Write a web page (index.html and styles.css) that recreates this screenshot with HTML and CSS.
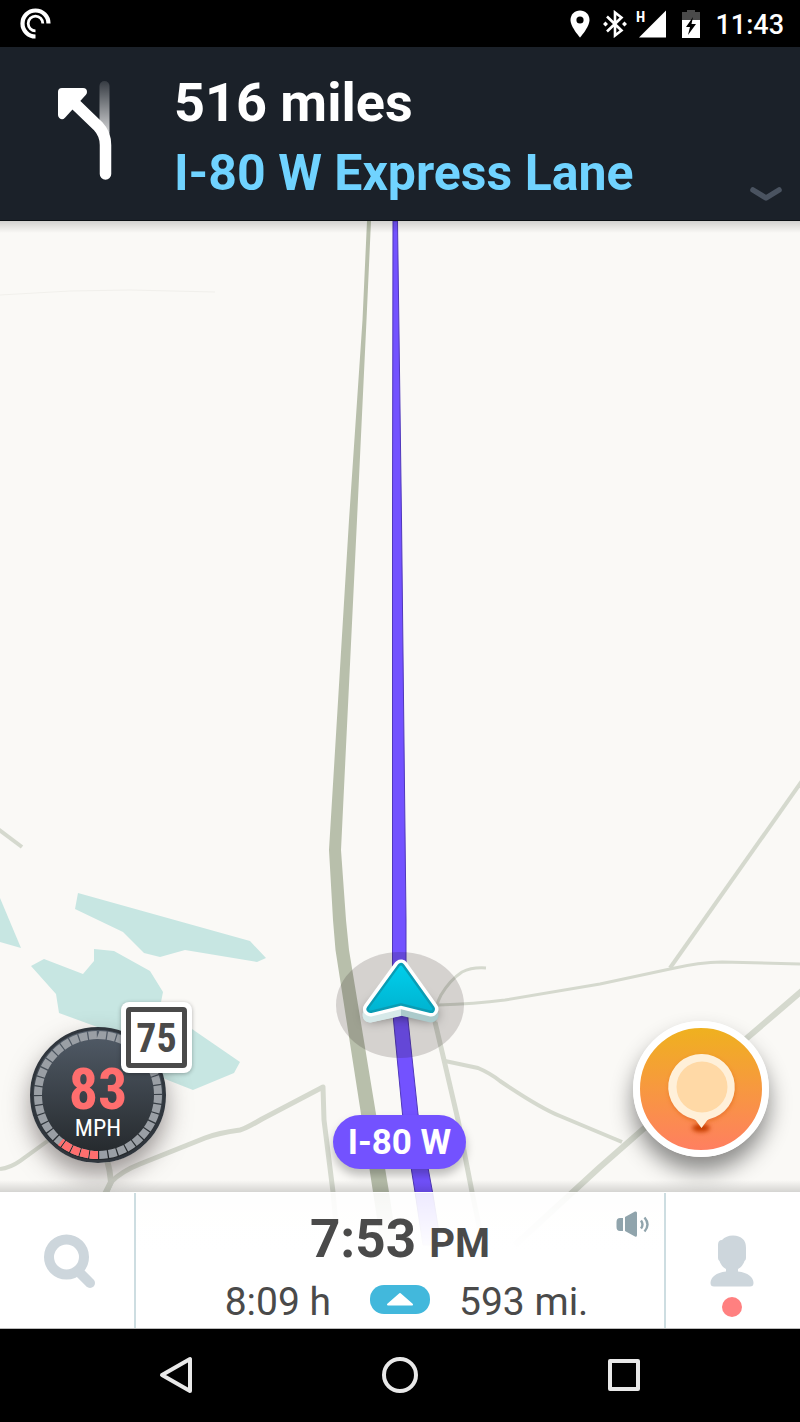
FILE: index.html
```html
<!DOCTYPE html>
<html lang="en">
<head>
    <meta charset="UTF-8">
    <meta name="viewport" content="width=device-width, initial-scale=1.0">
    <title>Navigation</title>
    <link rel="stylesheet" href="styles.css">
</head>
<body>
    <div class="status-bar">
        <svg class="app-icon" width="32" height="32" viewBox="0 0 32 32" fill="none" stroke="#fff">
            <path d="M15.500 28.500A13 13 0 1 1 28.500 15.500" stroke-width="4.200"/>
            <path d="M15.500 22.800A7.300 7.300 0 1 1 22.800 15.500" stroke-width="2.800"/>
        </svg>
        <svg class="pin-icon" width="20" height="28" viewBox="0 0 20 28">
            <path d="M10 .5C4.600.5.500 4.600.5 10c0 7 9.500 17.500 9.500 17.500S19.500 17 19.500 10C19.500 4.600 15.400.5 10 .5z" fill="#fff"/>
            <circle cx="10" cy="10" r="3.600" fill="#000"/>
        </svg>
        <svg class="bt-icon" width="24" height="28" viewBox="0 0 24 28" fill="none" stroke="#fff" stroke-width="2.600">
            <path d="M4 6.500l14.500 14-6.500 5V2.500l6.500 5L4 21.500"/>
            <path d="M0 14l2.500-2.500L5 14l-2.500 2.500zM19 14l2.500-2.500L24 14l-2.500 2.500z" fill="#fff" stroke="none"/>
        </svg>
        <svg class="signal-icon" width="30" height="28" viewBox="0 0 30 28" fill="#fff">
            <path d="M30 .5v27H3z"/>
            <text x="0" y="12" class="signal-type">H</text>
        </svg>
        <svg class="battery-icon" width="18" height="28" viewBox="0 0 18 28">
            <path d="M0 2h5V0h8v2h5v9H0z" fill="#4a4a4a"/>
            <path d="M0 10h18v18H0z" fill="#fff"/>
            <path d="M11 7L4 17h4l-2 8 8-11H9.500z" fill="#000"/>
        </svg>
        <span class="clock">11:43</span>
    </div>

    <header class="directions">
        <svg class="turn-icon" width="56" height="102" viewBox="56 79 56 102">
            <defs>
                <linearGradient id="fade" x1="0" y1="0" x2="0" y2="1">
                    <stop offset="0" stop-color="#fff" stop-opacity=".12"/>
                    <stop offset="1" stop-color="#fff" stop-opacity=".85"/>
                </linearGradient>
            </defs>
            <rect x="99.500" y="81" width="10" height="56" rx="5" fill="url(#fade)"/>
            <path d="M105.500 174V145Q105.500 134 98 126L72 101" fill="none" stroke="#fff" stroke-width="11.500" stroke-linecap="round"/>
            <path d="M62 92H83L62 115z" fill="#fff" stroke="#fff" stroke-width="8" stroke-linejoin="round"/>
        </svg>
        <div class="direction-text">
            <h1 class="distance">516 miles</h1>
            <p class="street">I-80 W Express Lane</p>
        </div>
        <button class="expand" aria-label="Show next turns">
            <svg width="32" height="14" viewBox="0 0 32 14" fill="none" stroke="#4a5360" stroke-width="5.500" stroke-linecap="round" stroke-linejoin="round">
                <path d="M3 3l13 8 13-8"/>
            </svg>
        </button>
    </header>

    <main class="map">
        <svg class="map-canvas" viewBox="0 221 800 1108" preserveAspectRatio="xMidYMax slice">
            <defs>
                <linearGradient id="car" x1="0" y1="0" x2="0" y2="1">
                    <stop offset="0" stop-color="#00cdea"/>
                    <stop offset="1" stop-color="#00b5d2"/>
                </linearGradient>
                <filter id="car-shadow" x="-60%" y="-100%" width="220%" height="300%">
                    <feGaussianBlur stdDeviation="6"/>
                </filter>
            </defs>

            <!-- water -->
            <g fill="#c7e6e2">
                <path d="M78 893L250 941 266 958 257 962 185 950 160 957 144 953 123 932 75 909z"/>
                <path d="M0 898L21 948 0 942z"/>
                <path d="M31 966L44 959 83 974 94 961V949L114 951 150 971 163 992 160 1007 192 1029 240 1062 234 1073 193 1090 165 1079 100 1028 59 1013 56 994z"/>
            </g>

            <!-- small roads -->
            <g fill="none" stroke="#d5d9ce" stroke-width="4" stroke-linejoin="round">
                <path d="M0 295L70 291 130 290 215 292" stroke="#f1f0ec" stroke-width="1"/>
                <path d="M-2 829L22 847"/>
                <path d="M802 781L670 968"/>
                <path d="M438 1005Q475 1004 505 1000L600 984 670 969Q700 962 722 962L800 964" stroke-width="3"/>
                <path d="M435 1024Q434 1008 441 995 450 980 462 972 472 967 486 968" stroke-width="3"/>
                <path d="M435 1022L444 1060 458 1120 472 1192 482 1240" stroke-width="5"/>
                <path d="M445 1061L478 1068Q490 1073 500 1081 540 1108 560 1116L622 1142" stroke-width="4"/>
                <path d="M803 990L747 1038 600 1167 515 1245" stroke-width="6"/>
                <path d="M0 1169Q10 1168 20 1161L60 1132" stroke-width="4"/>
                <path d="M106 1194L111 1182Q122 1171 140 1164L205 1138Q218 1133 240 1130 245 1129 262 1119L323 1087 324 1120 333 1192 336 1225" stroke-width="5"/>
                <path d="M107 1160Q110 1170 111 1182L105 1194" stroke-width="6"/>
            </g>

            <!-- highway and route -->
            <path d="M367 221H371L366.500 320 357 520 341 850 346 920 349 950 376 1114 389 1192 397 1245H381L373 1192 361 1114 335.500 950 333 920 329 850 349 520 362.500 320z" fill="#b8bfab"/>
            <path d="M393 221H397.500L401.500 520 406 920V960L408 1020 418 1114 432.500 1192 441 1245H423L415 1192 402.500 1114 393.500 1020 392.500 960V520z" fill="#7352ff" stroke="#5038bb" stroke-width="1"/>

            <!-- current position -->
            <ellipse cx="400" cy="1005" rx="64" ry="53" fill="#201010" fill-opacity=".17"/>
            <path d="M401 990L371 1014 401 1010 431 1014z" fill="#000" fill-opacity=".4" stroke="#000" stroke-opacity=".4" stroke-width="14" stroke-linejoin="round" filter="url(#car-shadow)"/>
            <path d="M401 973L370 1015 401 1008z" fill="#d6e9e9" stroke="#d6e9e9" stroke-width="15" stroke-linejoin="round"/>
            <path d="M401 1008L431 1015 401 980z" fill="#abcacb" stroke="#abcacb" stroke-width="15" stroke-linejoin="round"/>
            <path d="M363 1009V1015Q363 1023 371 1022.500L401 1016V1001z" fill="#d6e9e9"/>
            <g stroke-linejoin="round">
                <path d="M401 967L370.500 1009 401 1001.500 431 1009z" fill="#fff" stroke="#fff" stroke-width="15"/>
                <path d="M401 967L370.500 1009 401 1001.500 431 1009z" fill="#0a9cb4" stroke="#0a9cb4" stroke-width="8"/>
                <path d="M401 967L370.500 1009 401 1001.500 431 1009z" fill="url(#car)" stroke="url(#car)" stroke-width="3"/>
            </g>
        </svg>

        <div class="map-controls">
            <div class="speedometer">
                <svg class="gauge" viewBox="0 0 136 136" fill="none" stroke-width="8">
                    <g transform="rotate(90 68 68)">
                        <circle cx="68" cy="68" r="60" pathLength="400" stroke="#9a9fa5" stroke-dasharray="8.700 1.300"/>
                        <circle cx="68" cy="68" r="60" pathLength="400" stroke="#ff6e6e" stroke-dasharray="8.700 1.300 8.700 1.300 8.700 1.300 8.700 1.300 3 357"/>
                    </g>
                </svg>
                <span class="speed">83</span>
                <span class="unit">MPH</span>
                <div class="speed-limit"><span>75</span></div>
            </div>

            <div class="road-label">I-80 W</div>

            <button class="report" aria-label="Report">
                <svg width="122" height="122" viewBox="7 7 122 122">
                    <defs>
                        <filter id="soft" x="-50%" y="-80%" width="200%" height="260%">
                            <feGaussianBlur stdDeviation="2"/>
                        </filter>
                    </defs>
                    <ellipse cx="68" cy="107" rx="9" ry="4" fill="#c63c00" filter="url(#soft)"/>
                    <circle cx="69" cy="68" r="33" fill="#d85a10" fill-opacity=".5" filter="url(#soft)"/>
                    <path d="M69 33a33 33 0 0 1 7 65.200Q74 99 73 101L68.500 107 64 101Q63 99 61 98.200A33 33 0 0 1 69 33z" fill="#fff0d9"/>
                    <circle cx="69" cy="66" r="25.500" fill="#ffd9a6"/>
                </svg>
            </button>
        </div>

        <section class="bottom-bar">
            <button class="side-button search" aria-label="Search">
                <svg width="52" height="56" viewBox="0 0 52 56" fill="none" stroke="#cdd6dc" stroke-width="10" stroke-linecap="round">
                    <circle cx="22.500" cy="23" r="17.500"/>
                    <path d="M35 38l11 11"/>
                </svg>
            </button>

            <div class="eta">
                <div class="arrival">
                    <p class="arrival-time">7:53 <span class="meridiem">PM</span></p>
                    <button class="sound" aria-label="Sound">
                        <svg width="34" height="26" viewBox="0 0 34 26" fill="#90a4ac">
                            <path d="M4 7H7V20H4Q.5 20 .5 16V11Q.5 7 4 7z"/>
                            <path d="M9 6L19 .5Q21 0 21 2V24Q21 26.500 19 25.500L9 20z"/>
                            <path d="M25 9.500Q28 13.500 25 17.500M28.500 6.500Q34.500 13.500 28.500 20.500" fill="none" stroke="#90a4ac" stroke-width="2.400"/>
                        </svg>
                    </button>
                </div>
                <div class="trip">
                    <span class="duration">8:09 h</span>
                    <button class="routes" aria-label="Routes">
                        <svg width="28" height="14" viewBox="0 0 28 14" fill="#fff" stroke="#fff" stroke-width="2" stroke-linejoin="round">
                            <path d="M14 2L26 12.500H2z"/>
                        </svg>
                    </button>
                    <span class="remaining">593 mi.</span>
                </div>
            </div>

            <button class="side-button profile" aria-label="Profile">
                <svg width="44" height="52" viewBox="0 0 44 52" fill="#cdd6dc">
                    <path d="M12 5Q16 .5 23 .5 36 1 36 13V23Q36 25 34.500 26 33 31 28 34V36.500Q43 38.500 43.500 48 43.500 51.500 40 51.500H4Q.5 51.500 .5 48 1 38.500 16 36.500V34Q11 31 9.500 26 8 25 8 23V10Q8 5 12 5z"/>
                </svg>
                <span class="offline-dot"></span>
            </button>
        </section>
    </main>

    <nav class="system-nav">
        <button aria-label="Back">
            <svg width="36" height="38" viewBox="0 0 36 38"><path d="M32 3V35L4 19z"/></svg>
        </button>
        <button aria-label="Home">
            <svg width="38" height="38" viewBox="0 0 38 38"><circle cx="19" cy="19" r="16"/></svg>
        </button>
        <button aria-label="Recent apps">
            <svg width="34" height="34" viewBox="0 0 34 34"><rect x="3" y="3" width="28" height="28"/></svg>
        </button>
    </nav>
</body>
</html>
```

FILE: styles.css
```css
* {
    margin: 0;
    padding: 0;
    box-sizing: border-box;
}

body {
    font-family: Roboto, sans-serif;
    background: #000;
    display: flex;
    flex-direction: column;
    min-height: 100vh;
}

button {
    background: none;
    border: none;
    cursor: pointer;
    display: flex;
    align-items: center;
    justify-content: center;
}

svg {
    display: block;
}

/* status bar */
.status-bar {
    height: 47px;
    padding: 0 16px 0 20px;
    display: flex;
    align-items: center;
    color: #fff;
}

.app-icon {
    margin-right: auto;
}

.pin-icon {
    margin-right: 13px;
}

.bt-icon {
    margin-right: 9px;
}

.signal-icon {
    margin-right: 16px;
    overflow: visible;
}

.signal-type {
    font-family: "Roboto Condensed", "Liberation Sans Narrow", Roboto, sans-serif;
    font-size: 15px;
    font-weight: 700;
}

.battery-icon {
    margin-right: 15px;
}

.clock {
    font-size: 27px;
    font-weight: 500;
    line-height: 32px;
    padding-top: 2px;
}

/* next turn */
.directions {
    position: relative;
    display: flex;
    padding: 21px 16px 12px 56px;
    background: #1b2129;
    border-bottom: 1px solid #0b0f14;
}

.turn-icon {
    margin-top: 11px;
    margin-right: 62px;
}

.direction-text {
    line-height: 70px;
    white-space: nowrap;
}

.distance {
    font-size: 54px;
    font-weight: 700;
    color: #fff;
}

.street {
    font-size: 50px;
    font-weight: 700;
    color: #70d3ff;
}

.expand {
    position: absolute;
    right: 18px;
    bottom: 19px;
}

/* map */
.map {
    position: relative;
    flex: 1;
    display: flex;
    flex-direction: column;
    justify-content: flex-end;
    background: #faf9f6;
    overflow: hidden;
}

.map::before {
    content: "";
    position: absolute;
    z-index: 1;
    top: 0;
    left: 0;
    right: 0;
    height: 12px;
    background: linear-gradient(rgba(0, 0, 0, 0.16), rgba(0, 0, 0, 0));
}

.map-canvas {
    position: absolute;
    inset: 0;
    width: 100%;
    height: 100%;
}

.map-controls {
    position: relative;
    display: grid;
    grid-template-columns: 1fr auto 1fr;
    align-items: end;
    padding: 0 31px 23px 30px;
}

.map-controls::after {
    content: "";
    position: absolute;
    left: 0;
    right: 0;
    bottom: 0;
    height: 12px;
    background: linear-gradient(rgba(0, 0, 0, 0), rgba(0, 0, 0, 0.15));
}

.speedometer {
    position: relative;
    width: 136px;
    height: 136px;
    margin-bottom: 6px;
    padding-top: 34px;
    border-radius: 50%;
    background: linear-gradient(#525c68, #23272a);
    border: 3px solid #30363d;
    box-shadow: 0 12px 24px rgba(60, 50, 50, 0.5);
    display: flex;
    flex-direction: column;
    align-items: center;
}

.gauge {
    position: absolute;
    inset: -3px;
}

.speed {
    font-family: "Roboto Condensed", "Liberation Sans Narrow", Roboto, sans-serif;
    font-size: 58px;
    font-weight: 700;
    line-height: 50px;
    color: #ff6e6e;
}

.unit {
    font-family: "Roboto Condensed", "Liberation Sans Narrow", Roboto, sans-serif;
    font-size: 24px;
    line-height: 28px;
    color: #fff;
}

.speed-limit {
    position: absolute;
    top: -28px;
    right: -29px;
    width: 71px;
    height: 71px;
    padding: 5px;
    border-radius: 8px;
    background: #fff;
    box-shadow: 0 1px 4px rgba(0, 0, 0, 0.3);
}

.speed-limit span {
    display: block;
    padding-top: 2px;
    border: 5px solid #4a4a4a;
    border-radius: 4px;
    font-family: "Roboto Condensed", "Liberation Sans Narrow", Roboto, sans-serif;
    font-size: 40px;
    font-weight: 700;
    line-height: 49px;
    text-align: center;
    color: #4a4a4a;
}

.road-label {
    padding: 2px 15px 0;
    border-radius: 27px;
    background: #7352ff;
    box-shadow: 0 6px 10px rgba(0, 0, 0, 0.25);
    font-size: 35px;
    font-weight: 700;
    line-height: 52px;
    color: #fff;
}

.report {
    justify-self: end;
    width: 136px;
    height: 136px;
    margin-bottom: 12px;
    border: 7px solid #fff;
    border-radius: 50%;
    background: linear-gradient(#efb11f, #ff7f60);
    box-shadow: 0 14px 22px rgba(0, 0, 0, 0.45);
}

/* bottom bar */
.bottom-bar {
    position: relative;
    display: grid;
    grid-template-columns: 136px 1fr 136px;
    min-height: 137px;
    border-top: 1px solid #fff;
    border-bottom: 1px solid #bbb;
    background: linear-gradient(rgba(255, 255, 255, 0.88), #fff 45%);
}

.side-button {
    flex-direction: column;
    background: #fff;
}

.search {
    border-right: 2px solid #cddde1;
    padding: 5px 0 3px 5px;
}

.profile {
    border-left: 2px solid #cddde1;
    gap: 10px;
    padding: 30px 2px 0 0;
}

.offline-dot {
    width: 20px;
    height: 20px;
    border-radius: 50%;
    background: #ff8080;
}

.eta {
    padding-top: 16px;
    color: #4a4a4a;
}

.arrival,
.trip {
    display: grid;
    grid-template-columns: 1fr auto 1fr;
}

.arrival-time {
    grid-column: 2;
    font-size: 53px;
    font-weight: 700;
    line-height: 60px;
}

.meridiem {
    font-size: 40px;
    line-height: 40px;
}

.sound {
    justify-self: end;
    align-self: start;
    margin: 2px 14px 0 0;
}

.trip {
    align-items: center;
    column-gap: 29px;
    margin-top: 8px;
    font-size: 39px;
    line-height: 51px;
}

.duration {
    text-align: right;
    padding-right: 10px;
}

.routes {
    width: 60px;
    height: 29px;
    margin-bottom: 7px;
    border-radius: 14px;
    background: #42b8dc;
}

/* android buttons */
.system-nav {
    height: 93px;
    padding: 0 8% 2px;
    display: grid;
    grid-template-columns: repeat(3, 1fr);
}

.system-nav svg {
    fill: none;
    stroke: #e8e8e8;
    stroke-width: 4px;
    stroke-linejoin: round;
}
```
